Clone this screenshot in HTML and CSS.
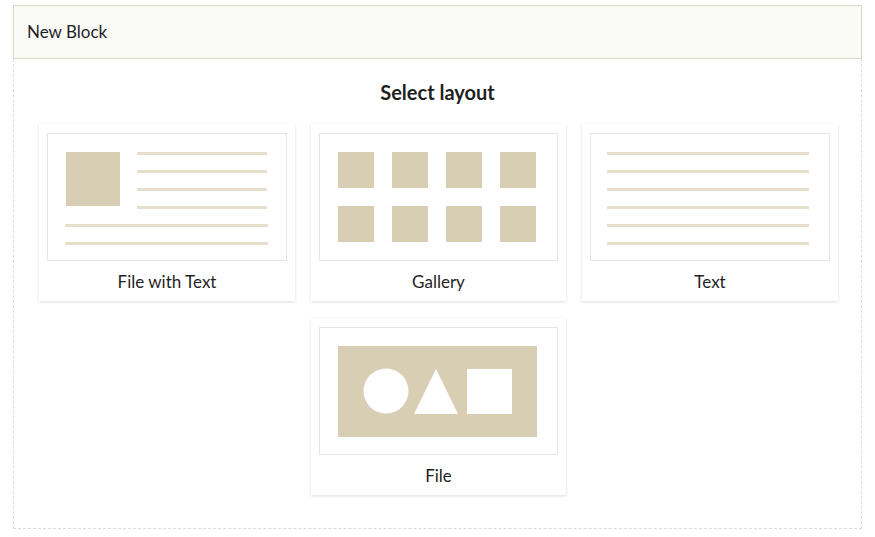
FILE: index.html
```html
<!DOCTYPE html>
<html>
<head>
<meta charset="utf-8">
<link rel="stylesheet" href="styles.css">
</head>
<body>
<div class="block">
  <div class="block-header">New Block</div>
  <div class="block-body">
    <h2 class="title">Select layout</h2>
    <div class="layouts">
      <div class="card">
        <div class="preview">
          <svg viewBox="0 0 237 126" width="237" height="126">
            <rect x="18" y="18" width="54" height="54" fill="#d8ceb4"/>
            <g stroke="#e6dfcc" stroke-width="3">
              <line x1="89" y1="19.5" x2="219" y2="19.5"/>
              <line x1="89" y1="37.5" x2="219" y2="37.5"/>
              <line x1="89" y1="55.5" x2="219" y2="55.5"/>
              <line x1="89" y1="73.5" x2="219" y2="73.5"/>
              <line x1="17" y1="91.5" x2="220" y2="91.5"/>
              <line x1="17" y1="109.5" x2="220" y2="109.5"/>
            </g>
          </svg>
        </div>
        <div class="label">File with Text</div>
      </div>
      <div class="card">
        <div class="preview">
          <svg viewBox="0 0 237 126" width="237" height="126" fill="#d8ceb4">
            <rect x="18" y="18" width="36" height="36"/>
            <rect x="72" y="18" width="36" height="36"/>
            <rect x="126" y="18" width="36" height="36"/>
            <rect x="180" y="18" width="36" height="36"/>
            <rect x="18" y="72" width="36" height="36"/>
            <rect x="72" y="72" width="36" height="36"/>
            <rect x="126" y="72" width="36" height="36"/>
            <rect x="180" y="72" width="36" height="36"/>
          </svg>
        </div>
        <div class="label">Gallery</div>
      </div>
      <div class="card">
        <div class="preview">
          <svg viewBox="0 0 237 126" width="237" height="126">
            <g stroke="#e6dfcc" stroke-width="3">
              <line x1="16" y1="19.5" x2="218" y2="19.5"/>
              <line x1="16" y1="37.5" x2="218" y2="37.5"/>
              <line x1="16" y1="55.5" x2="218" y2="55.5"/>
              <line x1="16" y1="73.5" x2="218" y2="73.5"/>
              <line x1="16" y1="91.5" x2="218" y2="91.5"/>
              <line x1="16" y1="109.5" x2="218" y2="109.5"/>
            </g>
          </svg>
        </div>
        <div class="label">Text</div>
      </div>
      <div class="card">
        <div class="preview">
          <svg viewBox="0 0 237 126" width="237" height="126">
            <rect x="18" y="18" width="199" height="91" fill="#d8ceb4"/>
            <circle cx="66" cy="63" r="22.5" fill="#fff"/>
            <polygon points="94,86 116,41 138,86" fill="#fff"/>
            <rect x="147" y="41" width="45" height="45" fill="#fff"/>
          </svg>
        </div>
        <div class="label">File</div>
      </div>
    </div>
  </div>
</div>
</body>
</html>
```

FILE: styles.css
```css
* { box-sizing: border-box; }
html, body { background: #fff; }
body {
  margin: 5px 13px 8px 13px;
  font-family: Lato, "Open Sans", sans-serif;
  color: #222;
}
.block-header {
  height: 54px;
  background: #fafaf7;
  border: 1px solid #d9d8c3;
  padding: 0 13px 2px 13px;
  display: flex;
  align-items: center;
  font-size: 17px;
  color: #1f1f1f;
}
.block-body {
  border: 1px dashed #dcdcd2;
  border-top: none;
  height: 470px;
  padding-top: 19px;
}
.title {
  margin: 0;
  text-align: center;
  font-size: 20px;
  line-height: 28px;
  font-weight: 700;
  color: #1f1f1f;
}
.layouts {
  margin: 18px 0 0 25px;
  width: 799px;
  display: flex;
  flex-wrap: wrap;
  justify-content: center;
  gap: 17px 16px;
}
.card {
  width: 255.5px;
  height: 177px;
  background: #fff;
  padding: 9px 8px 0 8px;
  box-shadow: 0 1px 3px rgba(0,0,0,0.14);
  display: flex;
  flex-direction: column;
}
.preview {
  border: 1px solid #e4e4e4;
  height: 128px;
}
.preview svg { display: block; }
.label {
  flex: 1;
  display: flex;
  align-items: center;
  justify-content: center;
  font-size: 17px;
  color: #1f1f1f;
}
```
